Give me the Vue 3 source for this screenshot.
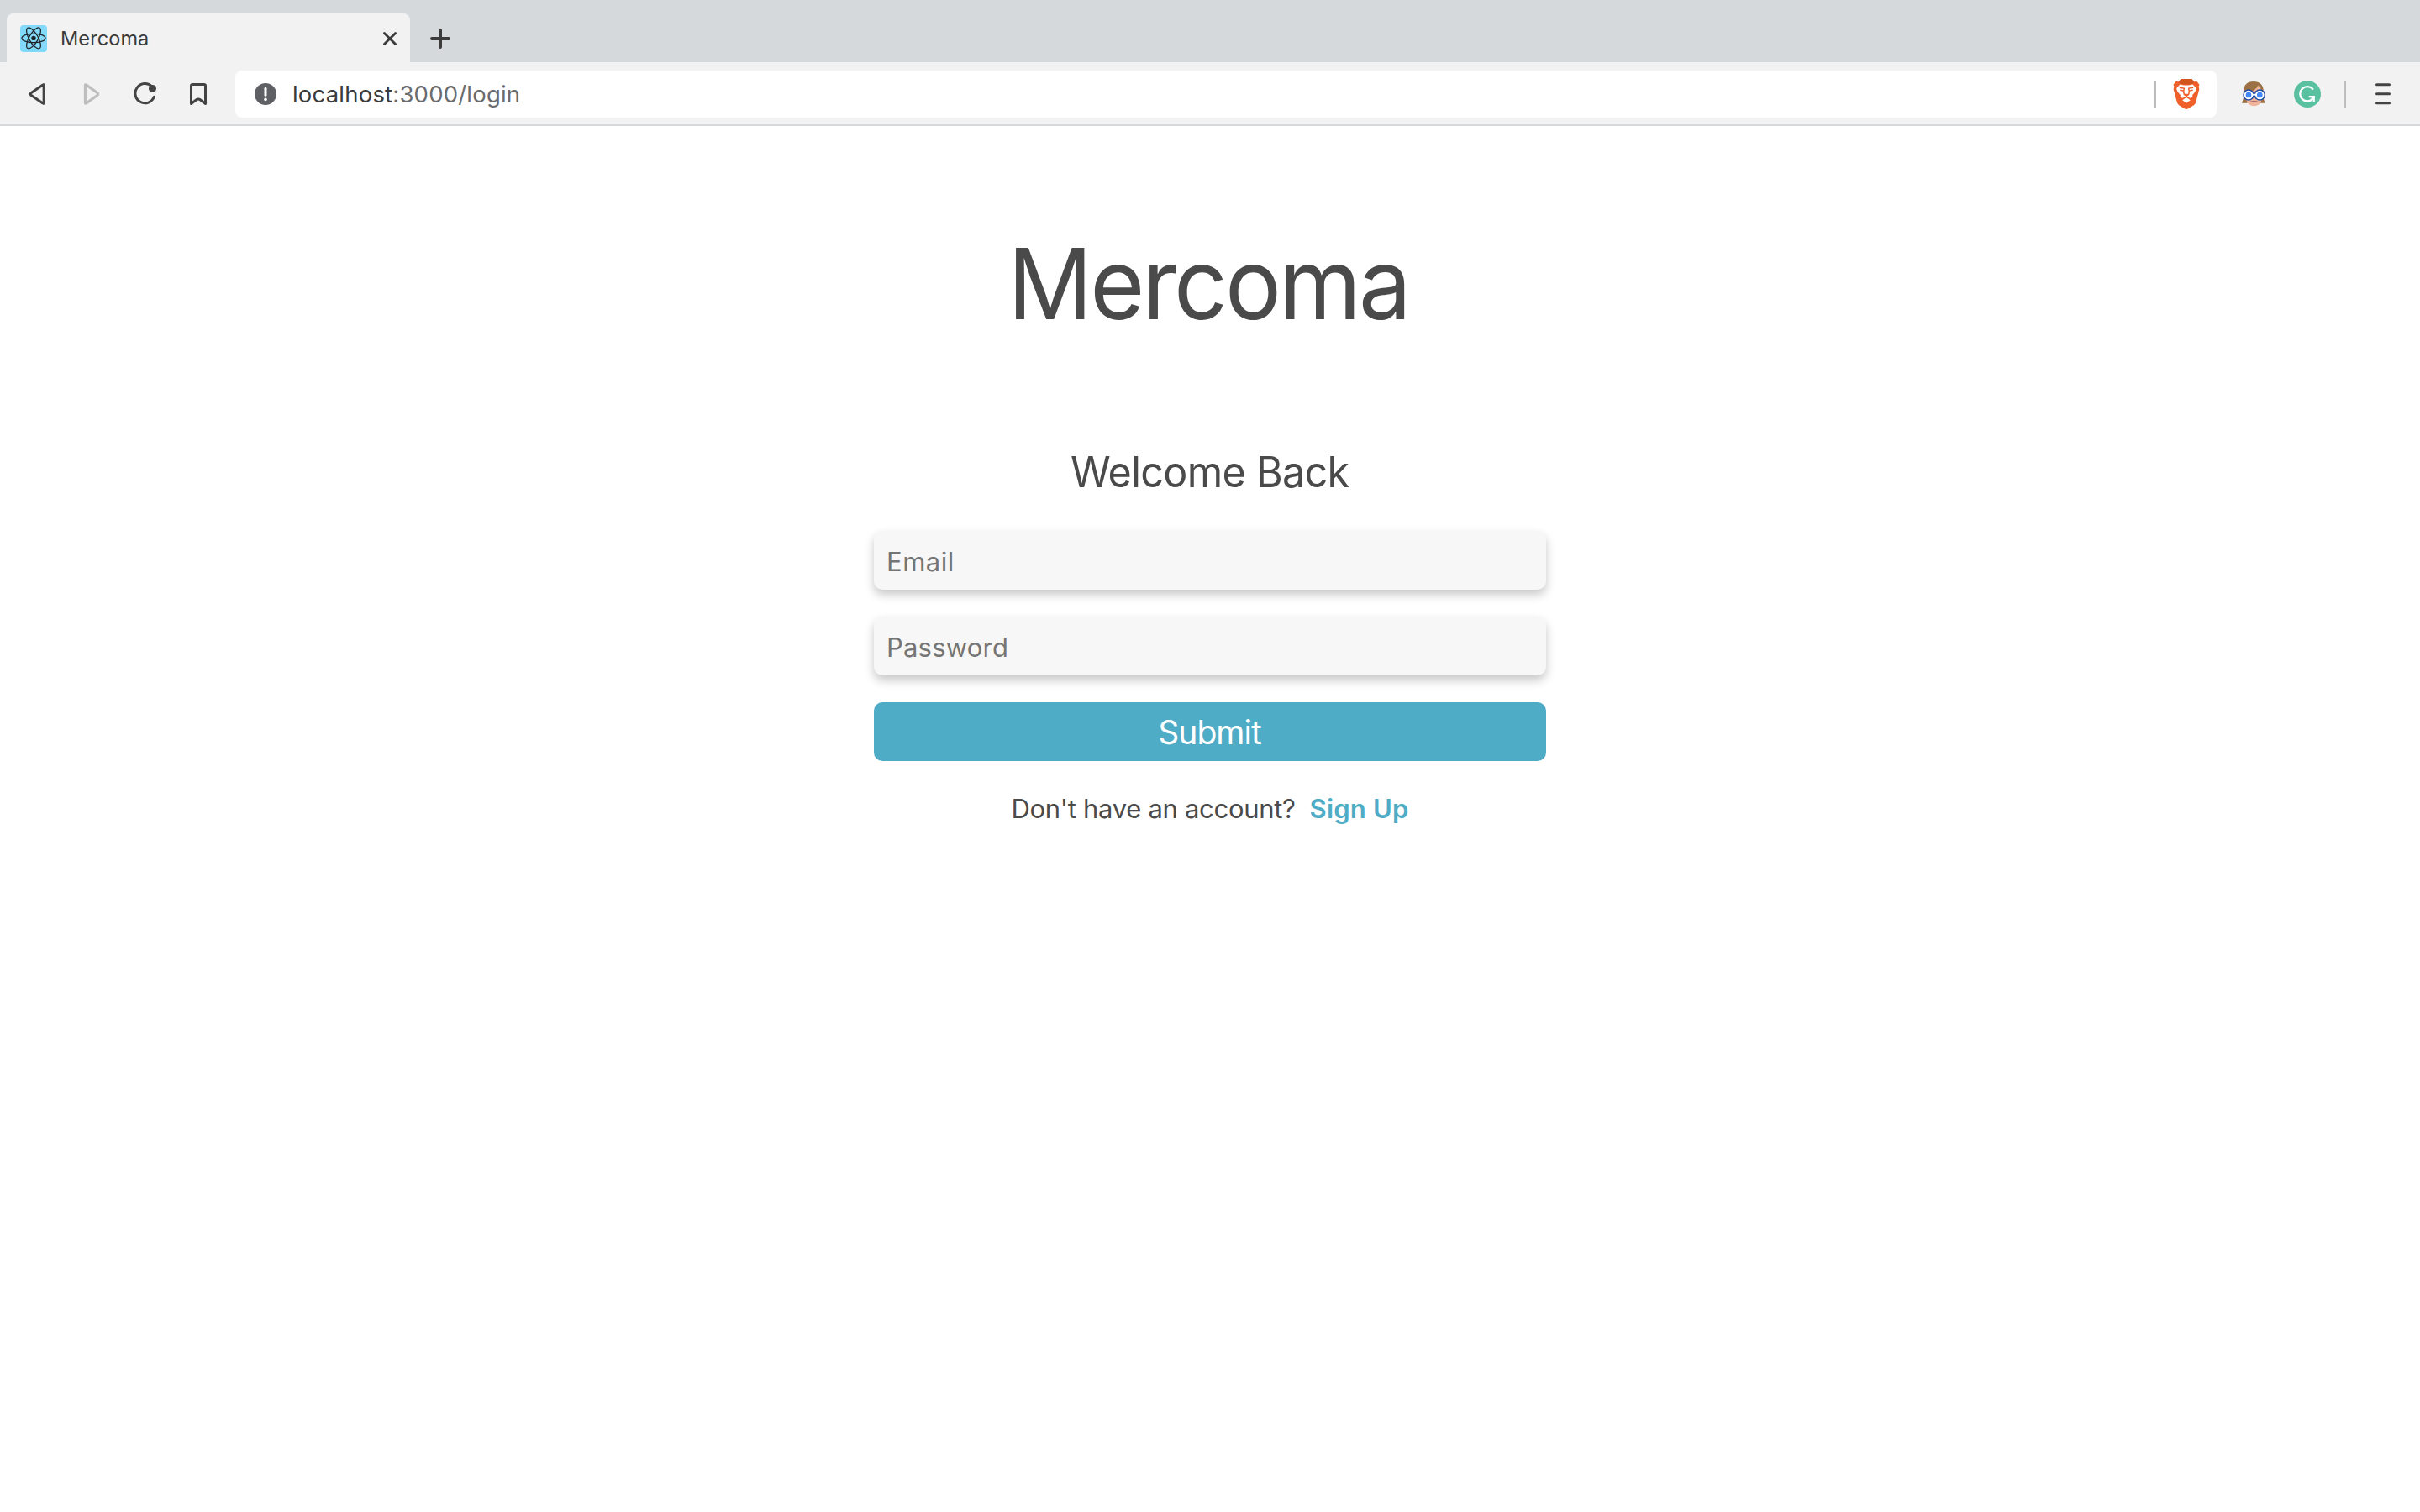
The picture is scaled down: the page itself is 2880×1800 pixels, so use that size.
<script setup>
import { ref } from 'vue'

const email = ref('')
const password = ref('')
</script>

<template>
  <div class="window">
    <header class="tabs">
      <div class="tab">
        <svg class="favicon" width="32" height="32" viewBox="0 0 32 32">
          <rect width="32" height="32" rx="4" fill="#83d9f9" />
          <g fill="none" stroke="#1f2326" stroke-width="1.3">
            <ellipse cx="16" cy="15.4" rx="14" ry="5.3" />
            <ellipse cx="16" cy="15.4" rx="14" ry="5.3" transform="rotate(60 16 15.4)" />
            <ellipse cx="16" cy="15.4" rx="14" ry="5.3" transform="rotate(120 16 15.4)" />
          </g>
          <circle cx="16" cy="15.4" r="2.7" fill="#1f2326" />
        </svg>
        <span class="tab-title">Mercoma</span>
        <svg class="close" width="18" height="18" viewBox="0 0 18 18">
          <path d="M2.4 2.4 15.6 15.6M15.6 2.4 2.4 15.6" stroke="#3b3b3b" stroke-width="2.8" stroke-linecap="round" />
        </svg>
      </div>
      <svg class="plus" width="24" height="24" viewBox="0 0 24 24">
        <path d="M12 2v20M2 12h20" stroke="#3b3b3b" stroke-width="4" stroke-linecap="round" />
      </svg>
    </header>

    <nav class="toolbar">
      <svg class="back" width="20" height="28" viewBox="0 0 20 28" fill="none" stroke="#434343" stroke-width="3.1" stroke-linejoin="round">
        <path d="M18.2 3.5v21q0 1.2-1.2.5L3.2 15.5q-1.9-1.5 0-3L17 3q1.2-.7 1.2.5Z" />
      </svg>
      <svg class="forward" width="20" height="28" viewBox="0 0 20 28" fill="none" stroke="#bdbdbd" stroke-width="3.1" stroke-linejoin="round">
        <path d="M2.4 3.5v21q0 1.2 1.2.5L16.8 15.5q1.9-1.5 0-3L3.6 3q-1.2-.7-1.2.5Z" />
      </svg>
      <svg class="reload" width="28" height="28" viewBox="0 0 28 28">
        <path d="M21.8 5A11.6 11.6 0 1 0 24.4 17.3" fill="none" stroke="#434343" stroke-width="3" stroke-linecap="round" />
        <circle cx="22.5" cy="7.5" r="4.5" fill="#434343" />
      </svg>
      <svg class="bookmark" width="20" height="28" viewBox="0 0 20 28" fill="none" stroke="#434343" stroke-width="3" stroke-linejoin="round">
        <path d="M1.5 4.1q0-1.7 1.7-1.7h13.6q1.7 0 1.7 1.7v21.4l-5.9-4.5q-2.6-1.9-5.2 0l-5.9 4.5Z" />
      </svg>

      <div class="address">
        <svg class="info" width="26" height="26" viewBox="0 0 26 26">
          <circle cx="13" cy="13" r="13" fill="#5f6063" />
          <path d="M13 6.2v8" stroke="#fff" stroke-width="3" stroke-linecap="round" />
          <circle cx="13" cy="19.4" r="1.8" fill="#fff" />
        </svg>
        <span class="url">localhost<span class="path">:3000/login</span></span>
        <span class="divider"></span>
        <svg class="brave" width="32" height="36" viewBox="0 0 32 36">
          <path d="M9.7 0h12.6l2.9 3.2 3.3-.3 3 3.8-1 2.6.9 2.6-4.3 16.2q-.6 2-2.3 3.2l-6.6 4q-2.3 1.4-4.6 0L7.2 31.3q-1.7-1.2-2.3-3.2L.6 11.9l.9-2.6-1-2.6 3-3.8 3.3.3Z" fill="#f0602a" />
          <path d="M9.7 0h12.6l2.9 3.2-1.3 2.5-5.3.7H13.4l-5.3-.7-1.3-2.5Z" fill="#d2541f" />
          <path d="M8.4 6.6 13 7.4h6l4.600-.8 4.300 4.600-1.400 4.100-3.500 4 .5 2.100-2.900 1.400L16 20.200l-4.600 2.600-2.900-1.400.5-2.100-3.500-4-1.400-4.100Z" fill="#fff" />
          <path d="M16 22l4.800 3.300L16 28.800l-4.800-3.500Z" fill="#fff" />
          <g fill="none" stroke="#f0602a" stroke-width="1.5" stroke-linejoin="round">
            <path d="m7.800 10.300 5.600.9-.8 4 .9 3.500 2.500 1.700 2.500-1.700.9-3.500-.8-4 5.600-.9" />
            <path d="M8.300 13.300l4 .7M23.700 13.300l-4 .7" />
          </g>
          <path d="M12.700 17.800h6.600L16 20.700Z" fill="#f0602a" />
        </svg>
      </div>

      <svg class="avatar" width="28" height="30" viewBox="0 0 28 30">
        <path d="M14 0C6 0 1.900 4.600 1.900 12v8L0 25.700h6.500l2-4h11l2 4h6L25.700 20v-9C25.700 4.300 21.300 0 14 0Z" fill="#9c7146" />
        <path d="M5.300 13C12 12.500 17.500 9.500 19.500 4.500q4.300 4 4.100 10.500v5.500q-.5 6-4.800 7.800-4.300 1.800-8.600 0-4.400-1.900-4.900-7.800Z" fill="#f0b49b" />
        <path d="M9.500 23.700q5-1.200 10 0-5 2.400-10 0Z" fill="#a5636b" />
        <path d="M12 15.500h5.500" stroke="#1d4ca5" stroke-width="4.4" />
        <g fill="#4285f4" stroke="#fff" stroke-width="1.9">
          <circle cx="8" cy="16" r="6.7" fill="#1d4ca5" stroke="none" />
          <circle cx="21.3" cy="16" r="6.7" fill="#1d4ca5" stroke="none" />
          <circle cx="8" cy="16" r="4.3" />
          <circle cx="21.3" cy="16" r="4.3" />
          <path d="M12.500 15.700h4.500" />
        </g>
      </svg>
      <svg class="grammarly" width="32" height="32" viewBox="0 0 32 32">
        <circle cx="16" cy="16" r="16" fill="#59c1a0" />
        <g fill="none" stroke="#fff" stroke-width="2.3">
          <path d="M22.3 9.800A8.700 8.700 0 1 0 22.500 21.500" stroke-linecap="round" />
          <path d="M17.700 19.200h6v6" />
          <path d="m23.700 19.200-3.400 3.900" />
        </g>
      </svg>
      <span class="divider end"></span>
      <svg class="menu" width="18" height="26" viewBox="0 0 18 26">
        <path d="M1.500 1.800h15M1.500 12.800h15M1.500 23.800h15" stroke="#434343" stroke-width="3" stroke-linecap="round" />
      </svg>
    </nav>

    <main class="page">
      <h1>Mercoma</h1>
      <h2>Welcome Back</h2>
      <form @submit.prevent>
        <input v-model="email" class="email" type="email" placeholder="Email" />
        <input v-model="password" type="password" placeholder="Password" />
        <button type="submit">Submit</button>
      </form>
      <p class="switch"><span class="question">Don't have an account?</span><a class="signup">Sign Up</a></p>
    </main>
  </div>
</template>

<style>
html,
body {
  background: #fff;
}
</style>

<style scoped>
.window {
  display: flex;
  flex-direction: column;
  height: 1800px;
  overflow: hidden;
  background: #fff;
  color: #4a4a4a;
  font-family: Inter, "Liberation Sans", sans-serif;
}
svg {
  display: block;
  flex: none;
}
.tabs {
  display: flex;
  flex: none;
  box-sizing: border-box;
  height: 74px;
  padding: 16px 0 0 8px;
  background: #d5d9dc;
}
.tab {
  display: flex;
  align-items: center;
  box-sizing: border-box;
  width: 480px;
  height: 58px;
  padding: 0 15px 0 16px;
  border-radius: 8px 8px 0 0;
  background: #f2f2f2;
}
.favicon {
  margin-top: 2px;
}
.tab-title {
  margin: 1px auto 0 16px;
  color: #3b3b3b;
  font-size: 23.5px;
  letter-spacing: 0.1px;
}
.close {
  margin-top: 2px;
}
.plus {
  margin: 18px 0 0 24px;
}
.toolbar {
  display: flex;
  flex: none;
  align-items: center;
  box-sizing: border-box;
  height: 76px;
  padding-left: 34px;
  border-bottom: 2px solid #d5d9dc;
  background: #f2f2f2;
}
.back,
.forward,
.reload,
.bookmark {
  margin-top: 2px;
}
.forward {
  margin-left: 45px;
}
.reload {
  margin-left: 40px;
}
.bookmark {
  margin-left: 39px;
}
.address {
  display: flex;
  align-items: center;
  box-sizing: border-box;
  width: 2358px;
  height: 56px;
  margin: 2px 0 0 34px;
  padding: 0 20px 0 23px;
  border-radius: 8px;
  background: #fff;
}
.url {
  margin: -1px auto 0 19px;
  color: #3b3b3b;
  font-size: 27.5px;
  letter-spacing: 0.2px;
}
.path {
  color: #6a6b6d;
}
.divider {
  width: 2px;
  height: 32px;
  background: #bdbdbd;
}
.brave {
  margin-left: 20px;
}
.avatar {
  margin: 2px 0 0 30px;
}
.grammarly {
  margin: 2px 0 0 34px;
}
.divider.end {
  margin: 2px 0 0 28px;
}
.menu {
  margin: 2px 0 0 35px;
}
.page {
  display: flex;
  flex: 1;
  flex-direction: column;
  align-items: center;
  padding-top: 116px;
}
h1,
h2,
p {
  margin: 0;
  font-weight: 400;
  white-space: nowrap;
}
h1 {
  margin-right: 3px;
  font-size: 117px;
  line-height: 144px;
  letter-spacing: -3px;
  transform: scaleX(0.955);
}
h2 {
  margin-top: 122px;
  font-size: 50.5px;
  line-height: 60px;
  letter-spacing: -0.7px;
  transform: scaleX(0.96);
}
form {
  display: flex;
  flex-direction: column;
  gap: 32px;
  width: 800px;
  margin-top: 40px;
}
input,
button {
  box-sizing: border-box;
  width: 100%;
  height: 70px;
  margin: 0;
  border: 0;
  border-radius: 10px;
  font-family: inherit;
}
input {
  padding: 2px 16px 0 15px;
  background: #f7f7f7;
  box-shadow: 0 6px 12px rgba(0, 0, 0, 0.22);
  color: #4a4a4a;
  font-size: 31px;
  letter-spacing: 0.2px;
}
.email {
  letter-spacing: 0.5px;
}
input::placeholder {
  color: #757575;
  opacity: 1;
}
button {
  padding: 1px 1px 0 0;
  background: #4facc6;
  color: #fff;
  font-size: 39px;
  font-weight: 400;
  letter-spacing: -1px;
}
.switch {
  display: flex;
  margin-top: 37px;
  font-size: 31px;
  line-height: 40px;
}
.question {
  letter-spacing: -0.3px;
}
.signup {
  margin-left: 17px;
  color: #4facc6;
  font-weight: 600;
  letter-spacing: 0.2px;
}
</style>
